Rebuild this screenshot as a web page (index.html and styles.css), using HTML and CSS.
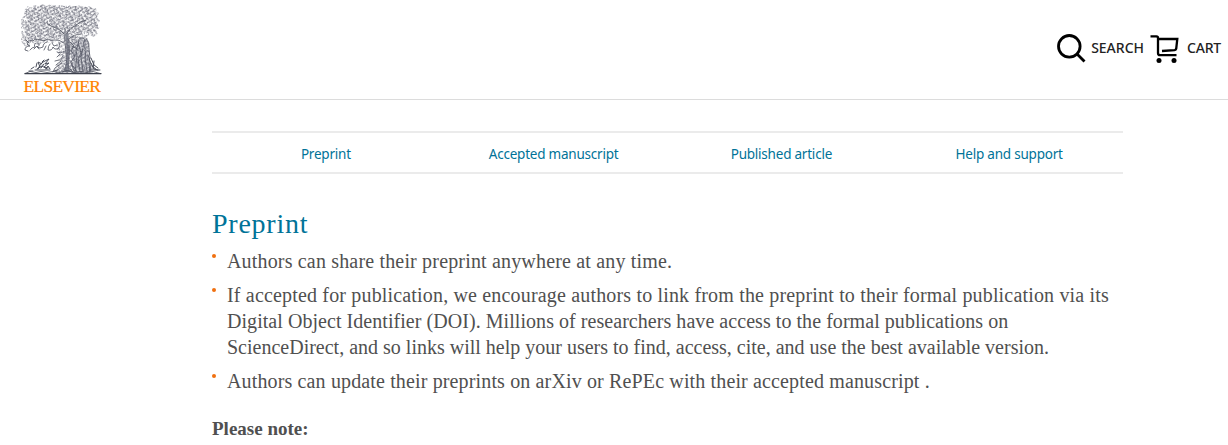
FILE: index.html
```html
<!doctype html>
<html lang="en">
  <head>
    <title>Preprint - Elsevier</title>
    <meta charset="utf-8"/>
    <link rel="stylesheet" href="styles.css">
  </head>
  <body>
    <header class="header">
      <a class="logo" href="#">
        <svg width="82" height="92" viewBox="21 3 82 92">
          <defs>
            <!-- leaf textures for the tree -->
            <pattern id="leaves" width="13" height="11" patternUnits="userSpaceOnUse" patternTransform="rotate(17)">
              <path d="M0 2q2-2 3 0t-2 2M4 1q2 1 1 3M7 0l1 2 2-1M11 1q-2 2 0 3l2-1M1 6l2-1 1 2-2 2M5 5q3-1 3 1t-2 1M10 5l-1 3 2 1M12 6l1 2M0 10l3-1M4 9q2-1 3 1M8 10l2-1 2 1"/>
            </pattern>
            <pattern id="twigs" width="9" height="7" patternUnits="userSpaceOnUse" patternTransform="rotate(-31)">
              <path d="M0 1l2 1 1-2M4 2q2-2 3 0M8 1l-1 3M1 4q2 0 1 2M4 4l1 2 2-1M7 6l2-1"/>
            </pattern>
          </defs>
          <g class="tree">
            <path fill="url(#leaves)" d="M25 9l3-3 4 3 2-4 5 1 4-2 3 2 5-2 5 2 4-1 4 1 5-1 4 2 6-2 5 2 5-1 3 2 4 0 1 4 2 1-2 4 3 4-3 3 3 4-4 2 2 5-5 2-3-2-5 2-4-3-6 4-5-1-5 4-6-2-6 4-8-1-6 3-7-2-6 4-3-3-3-4 2-5-3-4 3-5-3-5 4-4z"/>
            <path fill="url(#twigs)" d="M26 10l4-3 6 1 5-3 7 1 7-1 8 1 8 0 7 0 7 1 6 0 4 4 3 4-2 5 2 5-3 4 1 4-6 0-5-1-7 1-6 2-8 1-8 3-9-1-6 3-7-2-5 2-4-4 1-7-2-5 3-6z"/>
            <path class="branch" d="M65 72q3-10 1-21-2-10-1-22M68 72q-1-9 1-19 1-9-2-20M64 34q-4-5-8-6-5-1-9-5M67 33q3-5 9-8 5-4 10-5M69 39q5-5 12-5"/>
            <!-- curling boughs on the left -->
            <path class="branch" d="M64 43q-5-4-10-3-4 1-6-1-4 3-8 1-5-2-7 1-4-2-6 1 0 4 3 4-5 0-5 4l3 1M59 42q2 4-1 7-4 1-5-2-1 4-5 3 0-4 2-6M47 42q-4 1-4 5-3 2-6 0 3-1 2-4M36 43q-3 2-1 4-3 0-5 3M26 40l3 3M34 49l3-3 2 3M44 50l2-4M52 43l2 3 3-1M65 51q-5 3-8 1M60 54l-3 3M63 56q-3 3-2 5l-5 4M62 63l-7 5-2 4M59 60l-4 1"/>
            <path class="trunk" d="M65 34q2 12 1 20 1 10-3 18h7q-2-9 0-19-2-9-2-19z"/>
            <!-- figure and vine by the trunk -->
            <path class="shade" d="M70 44l6-4 9 0q4 6 3 15l2 18H73l-1-14z"/>
            <path class="figure" d="M70 42l4 4-3 5 4 5-4 6 3 9M79 39q4-3 6 1l-2 4 3 6-1 8 2 14M79 40l-1 5-2 5 1 6-2 16M79 46l2 7-3 6 2 13M83 48l-2 8 2 16M72 46l5 3M86 38q4 5 3 12 2 8 0 13l1 9M88 55l3 9-1 8M73 66l4 6M70 69l3 3"/>
            <path fill="url(#leaves)" d="M70 36l12 1 7 4 1 18 3 14H55l7-12 1-9z"/>
            <path fill="url(#twigs)" d="M56 44l14-7 17-2 4 25-2 13H54l5-14z"/>
            <path class="bush" d="M31 69l3-2M36 67l1-4M38 69q2-5 5-7l6-3-4 5 4-1-5 4 4 1M40 67l-2-5 4 2M42 62l2-2M37 69l5-3 5 3M46 69l2-3 2 3M41 68l3-4M35 70h15M29 71h4M54 71l4-1M91 58l3 7 4 3M91 63l3 6 4 1M94 61l-1 8M89 70h11M92 66l5 4"/>
            <path class="figure" d="M25 73.5l5-2 6 1 5-1 6 1 6-1 7 1 7-2 7 2 7-1 6 1 6-1 7 2"/>
            <path class="ground" d="M25 73.6H101"/>
          </g>
          <text class="logo-name" x="23.5" y="92" textLength="77.5">ELSEVIER</text>
        </svg>
      </a>
      <div class="tools">
        <a class="tool" href="#">
          <svg class="icon-search" width="30" height="30" viewBox="0 0 30 30">
            <circle cx="12.3" cy="12.3" r="10.8"/>
            <path d="M19.8 19.8l7.7 7.7"/>
          </svg>
          <span>SEARCH</span>
        </a>
        <a class="tool tool-cart" href="#">
          <svg class="icon-cart" width="30" height="30" viewBox="0 0 30 30">
            <path d="M.5 2.4H6.5Q8 2.4 8 4V19Q8 21.2 10 21.2H26.5M8 5H27.3L26.2 14.8Q26 15.9 24.5 16.1L12 17"/>
            <circle cx="9" cy="26.4" r="2.5"/>
            <circle cx="24" cy="26.4" r="2.5"/>
          </svg>
          <span>CART</span>
        </a>
      </div>
    </header>

    <main class="content">
      <nav class="tabs">
        <a href="#">Preprint</a>
        <a href="#">Accepted manuscript</a>
        <a href="#">Published article</a>
        <a href="#">Help and support</a>
      </nav>
      <h2>Preprint</h2>
      <ul class="points">
        <li>Authors can share their preprint anywhere at any time.</li>
        <li>If accepted for publication, we encourage authors to link from the preprint to their formal publication via its<br>
          <span class="line-doi">Digital Object Identifier (DOI). Millions of researchers have access to the formal publications on</span><br>
          <span class="line-links">ScienceDirect, and so links will help your users to find, access, cite, and use the best available version.</span></li>
        <li class="last">Authors can update their preprints on arXiv or RePEc with their accepted manuscript .</li>
      </ul>
      <p class="note">Please note:</p>
    </main>
  </body>
</html>
```
FILE: styles.css
```css
body{
  margin: 0;
  background: #fff;
  color: #505050;
  font-family: "Liberation Serif", serif;
  overflow: hidden;
}
a{
  text-decoration: none;
}

/* header */
.header{
  display: flex;
  justify-content: space-between;
  box-sizing: border-box;
  height: 100px;
  padding: 3px 7px 0 21px;
  border-bottom: 1px solid #dcdcdc;
}
.logo svg{
  display: block;
}
.tree path{
  stroke-linecap: round;
}
pattern path{
  fill: none;
  stroke: #555967;
  stroke-width: .68;
}
.branch,
.figure,
.bush{
  fill: none;
  stroke: #4b4f5c;
  stroke-width: .8;
}
.bush{
  stroke-width: 1;
}
.trunk{
  fill: #858893;
}
.shade{
  fill: #dcdde1;
}
.ground{
  stroke: #3c404c;
  stroke-width: 1.3;
}
.logo-name{
  fill: #ff8200;
  stroke: #ff8200;
  stroke-width: .2;
  font-family: "Liberation Serif", serif;
  font-size: 17.5px;
}
.tools{
  display: flex;
  align-items: flex-start;
  padding-top: 31px;
}
.tool{
  display: flex;
  color: #222;
  font: 500 14px/28px "Noto Sans", sans-serif;
}
.tool span{
  margin-left: 4px;
}
.tool-cart{
  margin-left: 6px;
}
.tool-cart span{
  margin-left: 7px;
  letter-spacing: -.2px;
}
.icon-search,
.icon-cart{
  fill: none;
  stroke: #000;
  stroke-width: 2.8;
}
.icon-cart{
  stroke-width: 2.3;
}
.icon-cart circle{
  fill: #000;
  stroke: none;
}

/* content */
.content{
  width: 911px;
  margin: 31px 0 0 212px;
}
.tabs{
  display: grid;
  grid-template-columns: repeat(4, 1fr);
  border-top: 2px solid #ebebeb;
  border-bottom: 2px solid #ebebeb;
  text-align: center;
  font: 13.5px/36px "Noto Sans", sans-serif;
  letter-spacing: -.22px;
}
.tabs a{
  padding-top: 3px;
  color: #007398;
}
h2{
  margin: 33px 0 0;
  color: #007398;
  font-size: 28px;
  font-weight: 400;
  line-height: 34px;
  letter-spacing: .75px;
}
.points{
  margin: 7px 0 0;
  padding: 0;
  list-style: none;
  font-size: 20px;
  line-height: 26px;
  letter-spacing: .17px;
  white-space: nowrap;
}
.points li{
  position: relative;
  margin-bottom: 8px;
  padding-left: 15px;
}
.points li::before{
  content: "";
  position: absolute;
  left: 0;
  top: 6px;
  width: 4px;
  height: 4px;
  border-radius: 50%;
  background: #f07010;
}
.points .line-doi{
  letter-spacing: .05px;
}
.points .line-links{
  letter-spacing: 0;
}
.points .last{
  letter-spacing: .14px;
}
.note{
  margin: 22px 0 0;
  font-size: 19px;
  font-weight: 700;
  line-height: 26px;
}
```
